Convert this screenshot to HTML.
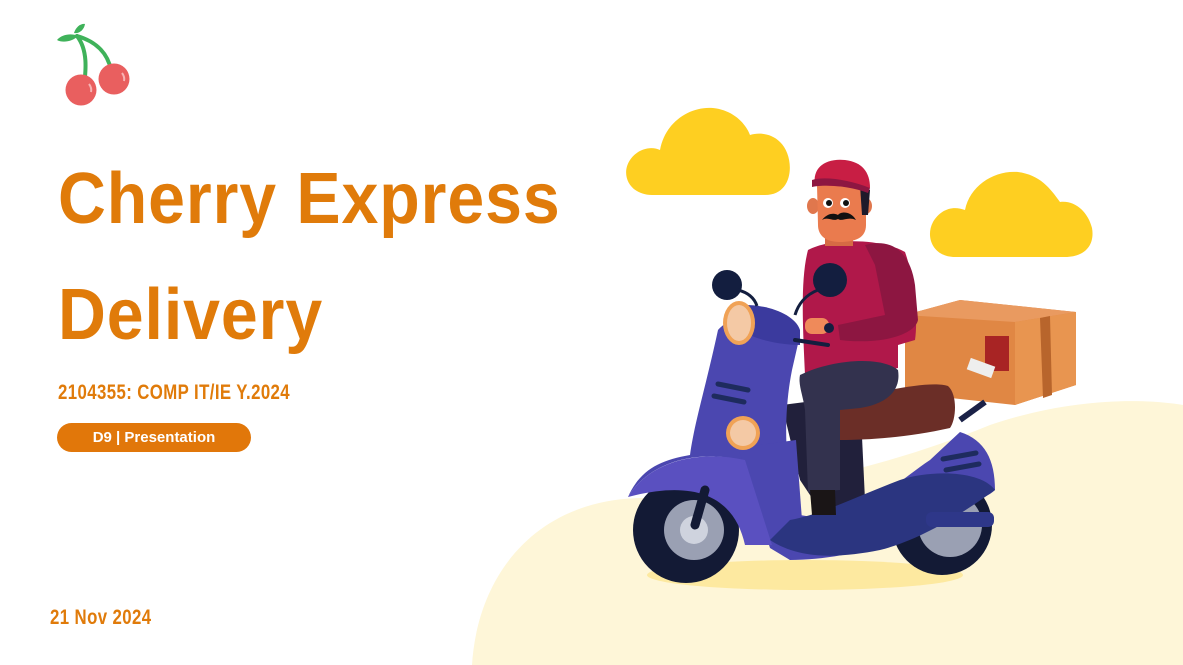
<!DOCTYPE html>
<html><head><meta charset="utf-8"><style>
html,body{margin:0;padding:0;width:1183px;height:665px;overflow:hidden;background:#fff}
.t{position:absolute;color:#e07b0a;font-family:"Liberation Sans",sans-serif;white-space:nowrap}
</style></head><body>
<svg width="1183" height="665" style="position:absolute;left:0;top:0">
<path d="M472,665 C478,570 540,500 640,498 C760,496 880,470 990,425 C1070,398 1140,398 1183,405 L1183,665 Z" fill="#fef6d8"/>
<path d="M77,36 C88,50 86,70 84,86" stroke="#3fb25a" stroke-width="4" fill="none" stroke-linecap="round"/>
<path d="M77,36 C98,42 108,55 111,70" stroke="#3fb25a" stroke-width="4" fill="none" stroke-linecap="round"/>
<path d="M57,40 C62,34 72,33 78,36 C72,42 62,43 57,40Z" fill="#3fb25a"/>
<path d="M74,33 C76,26 82,23 85,24 C84,30 79,34 74,33Z" fill="#3fb25a"/>
<circle cx="81" cy="90" r="15.5" fill="#e95f5f"/>
<circle cx="114" cy="79" r="15.5" fill="#e95f5f"/>
<path d="M89,84 Q92,88 91,92" stroke="#f7b3b3" stroke-width="2" fill="none"/>
<path d="M122,73 Q125,77 124,81" stroke="#f7b3b3" stroke-width="2" fill="none"/>
<path d="M652,195 C630,195 620,175 630,160 C638,148 652,146 660,150 C665,122 690,106 713,108 C732,110 745,122 750,135 C760,132 772,134 780,142 C795,156 795,195 765,195 Z" fill="#fecf21"/>
<path d="M955,257 C933,257 925,237 933,222 C940,210 952,205 965,210 C970,185 995,170 1018,172 C1040,175 1050,188 1060,202 C1075,200 1088,212 1092,228 C1095,245 1085,257 1065,257 Z" fill="#fecf21"/>
<ellipse cx="805" cy="575" rx="158" ry="15" fill="#fde9a0"/>
<path d="M905,315 L960,300 L1076,312 L1076,385 L1015,405 L905,393 Z" fill="#e08744"/>
<path d="M905,315 L960,300 L1076,312 L1015,322 Z" fill="#e99a60"/>
<path d="M1015,322 L1076,312 L1076,385 L1015,405 Z" fill="#e89550"/>
<path d="M1040,318 L1050,316 L1052,395 L1043,398 Z" fill="#b8652c"/>
<rect x="985" y="336" width="24" height="35" fill="#a82424"/>
<rect x="968" y="362" width="26" height="12" fill="#eee" transform="rotate(20 981 368)"/>
<path d="M960,420 L985,402" stroke="#1a2147" stroke-width="6"/>
<circle cx="686" cy="530" r="53" fill="#131a35"/>
<circle cx="694" cy="530" r="30" fill="#9aa0b3"/>
<circle cx="694" cy="530" r="14" fill="#cfd3de"/>
<circle cx="942" cy="525" r="50" fill="#131a35"/>
<circle cx="950" cy="525" r="32" fill="#9aa0b3"/>
<path d="M782,405 L860,395 L865,500 L820,510 L800,480 Z" fill="#21203b"/>
<path d="M718,330 C740,305 795,312 800,335 L792,370 C782,420 785,480 800,515 L830,520 C870,510 900,480 930,460 L960,432 C985,440 995,460 995,490 C985,500 960,505 930,520 C900,545 840,560 790,560 L770,545 C765,500 760,470 740,460 C700,450 650,460 628,497 C640,470 660,460 690,455 C695,420 705,390 718,330 Z" fill="#4b47b0"/>
<path d="M738,448 L796,440 L802,520 L790,560 L770,548 Z" fill="#4b47b0"/>
<path d="M628,497 C650,460 700,450 745,460 L772,545 L745,545 C735,500 700,478 628,497 Z" fill="#5a50c0"/>
<path d="M770,540 C800,560 840,558 880,550 C920,540 960,515 995,490 C980,470 930,470 900,480 C860,495 820,515 790,520 Z" fill="#2b3580"/>
<path d="M695,525 L705,490" stroke="#131a35" stroke-width="9" stroke-linecap="round"/>
<path d="M838,400 C880,392 930,380 948,386 C958,395 956,420 950,428 C910,437 870,440 840,440 Z" fill="#6b2e27"/>
<path d="M745,305 C770,305 795,315 800,330 L800,345 C780,345 760,340 750,335 Z" fill="#3b3a9e"/>
<ellipse cx="739" cy="323" rx="16" ry="22" fill="#f0a256"/>
<ellipse cx="739" cy="323" rx="12" ry="18" fill="#f4c9a5"/>
<circle cx="743" cy="433" r="17" fill="#f0a256"/>
<circle cx="743" cy="433" r="13" fill="#f4c9a5"/>
<path d="M718,384 L748,390 M714,396 L744,402" stroke="#1e2b5e" stroke-width="5" stroke-linecap="round"/>
<path d="M943,459 L976,453 M946,470 L979,464" stroke="#1e2b5e" stroke-width="5" stroke-linecap="round"/>
<rect x="926" y="512" width="68" height="15" rx="6" fill="#2e3789"/>
<circle cx="727" cy="285" r="15" fill="#131e3f"/>
<path d="M738,290 C750,293 755,300 757,306" stroke="#131e3f" stroke-width="3" fill="none"/>
<path d="M808,250 C830,238 880,238 905,252 C915,280 918,320 915,340 L898,345 L898,368 C870,375 830,378 805,375 C803,330 800,280 808,250Z" fill="#b0184a"/>
<path d="M865,245 C890,238 910,250 915,285 L918,320 C915,335 880,345 840,340 L838,325 L885,315 L875,265 Z" fill="#8d1641"/>
<path d="M800,375 C830,360 880,355 898,370 C902,395 880,405 860,408 L840,410 L840,490 L808,492 L805,410 C803,395 798,385 800,375Z" fill="#33324e"/>
<path d="M810,490 L835,490 L836,515 L812,515Z" fill="#1a1516"/>
<rect x="805" y="318" width="24" height="16" rx="7" fill="#ef8a5a"/>
<path d="M795,340 L828,345" stroke="#131e3f" stroke-width="4" stroke-linecap="round"/>
<circle cx="829" cy="328" r="5" fill="#131e3f"/>
<circle cx="830" cy="280" r="17" fill="#131e3f"/>
<path d="M818,290 C805,295 798,305 795,315" stroke="#131e3f" stroke-width="3" fill="none"/>
<rect x="825" y="228" width="28" height="18" fill="#d66a44"/>
<ellipse cx="813" cy="206" rx="6" ry="8" fill="#e0774d"/>
<ellipse cx="866" cy="206" rx="6" ry="8" fill="#e0774d"/>
<path d="M817,185 L866,185 L866,225 C866,238 855,242 840,242 C825,242 818,235 818,225 Z" fill="#ea7b4e"/>
<path d="M860,185 L870,190 L868,215 L862,215Z" fill="#1e1a2a"/>
<circle cx="828" cy="203" r="5" fill="#fff"/><circle cx="829" cy="203" r="3" fill="#111"/>
<circle cx="845" cy="203" r="5" fill="#fff"/><circle cx="846" cy="203" r="3" fill="#111"/>
<path d="M822,220 C830,210 838,215 838,215 C840,212 850,210 856,220 C848,216 842,222 838,219 C833,222 828,216 822,220Z" fill="#111"/>
<path d="M815,185 C812,168 825,158 845,160 C862,162 870,172 870,188 Z" fill="#c81e44"/>
<path d="M812,180 C825,176 850,180 870,188 L868,193 C850,186 825,184 812,187 Z" fill="#8d1641"/>
</svg>
<div class="t" style="left:58px;top:158px;font-size:72px;font-weight:bold;letter-spacing:1px;transform:scaleX(0.92);transform-origin:left">Cherry Express</div>
<div class="t" style="left:58px;top:274px;font-size:72px;font-weight:bold;letter-spacing:1px;transform:scaleX(0.92);transform-origin:left">Delivery</div>
<div class="t" style="left:58px;top:381px;font-size:21px;font-weight:bold;transform:scaleX(0.8);transform-origin:left;letter-spacing:0.5px">2104355: COMP IT/IE Y.2024</div>
<div style="position:absolute;left:57px;top:423px;width:194px;height:29px;border-radius:15px;background:#e1770a;color:#fff;font:bold 15px/29px 'Liberation Sans',sans-serif;text-align:center">D9 | Presentation</div>
<div class="t" style="left:50px;top:606px;font-size:21px;font-weight:bold;transform:scaleX(0.8);transform-origin:left;letter-spacing:0.5px">21 Nov 2024</div>
</body></html>
